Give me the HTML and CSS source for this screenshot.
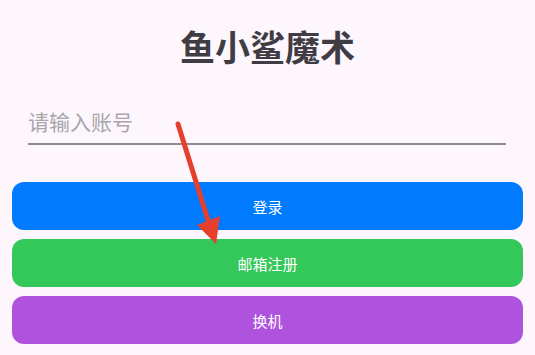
FILE: index.html
```html
<!DOCTYPE html>
<html lang="zh">
<head>
<meta charset="utf-8">
<link rel="stylesheet" href="styles.css">
</head>
<body>
<div class="page">
  <h1 class="title">鱼小鲨魔术</h1>
  <div class="field">
    <input class="input" type="text" placeholder="请输入账号">
  </div>
  <div class="buttons">
    <button class="btn btn-blue">登录</button>
    <button class="btn btn-green">邮箱注册</button>
    <button class="btn btn-purple">换机</button>
  </div>
  <svg class="arrow" width="535" height="355" viewBox="0 0 535 355">
    <line x1="178" y1="124" x2="211" y2="230" stroke="#e5402d" stroke-width="5" stroke-linecap="round"/>
    <polygon points="216,244 197,225 220,216" fill="#e5402d"/>
  </svg>
</div>
</body>
</html>
```
FILE: styles.css
```css
html, body {
  margin: 0;
  padding: 0;
  background: #fdf6fd;
}
body {
  font-family: "Noto Sans CJK SC", "Noto Sans", sans-serif;
  width: 535px;
  height: 355px;
  overflow: hidden;
}
.page {
  position: relative;
  padding: 0 12px;
  height: 355px;
}
.title {
  margin: 0;
  padding-top: 20px;
  height: 52px;
  line-height: 52px;
  text-align: center;
  font-size: 35px;
  font-weight: 700;
  color: #403c44;
}
.field {
  margin: 30px 17px 0 16px;
  border-bottom: 2px solid #8e8c90;
  height: 43px;
  box-sizing: border-box;
}
.input {
  width: 100%;
  border: 0;
  background: transparent;
  outline: none;
  padding: 0;
  height: 37px;
  font-family: inherit;
  font-size: 21px;
  color: #333;
}
.input::placeholder {
  color: #a8a6aa;
}
.buttons {
  margin-top: 37px;
  display: flex;
  flex-direction: column;
  gap: 9px;
}
.btn {
  border: 0;
  height: 48px;
  border-radius: 12px;
  color: #fff;
  font-family: inherit;
  font-size: 15px;
  width: 100%;
}
.btn-blue { background: #007aff; }
.btn-green { background: #34c759; }
.btn-purple { background: #af52de; }
.arrow {
  position: absolute;
  left: 0;
  top: 0;
  pointer-events: none;
}
```
